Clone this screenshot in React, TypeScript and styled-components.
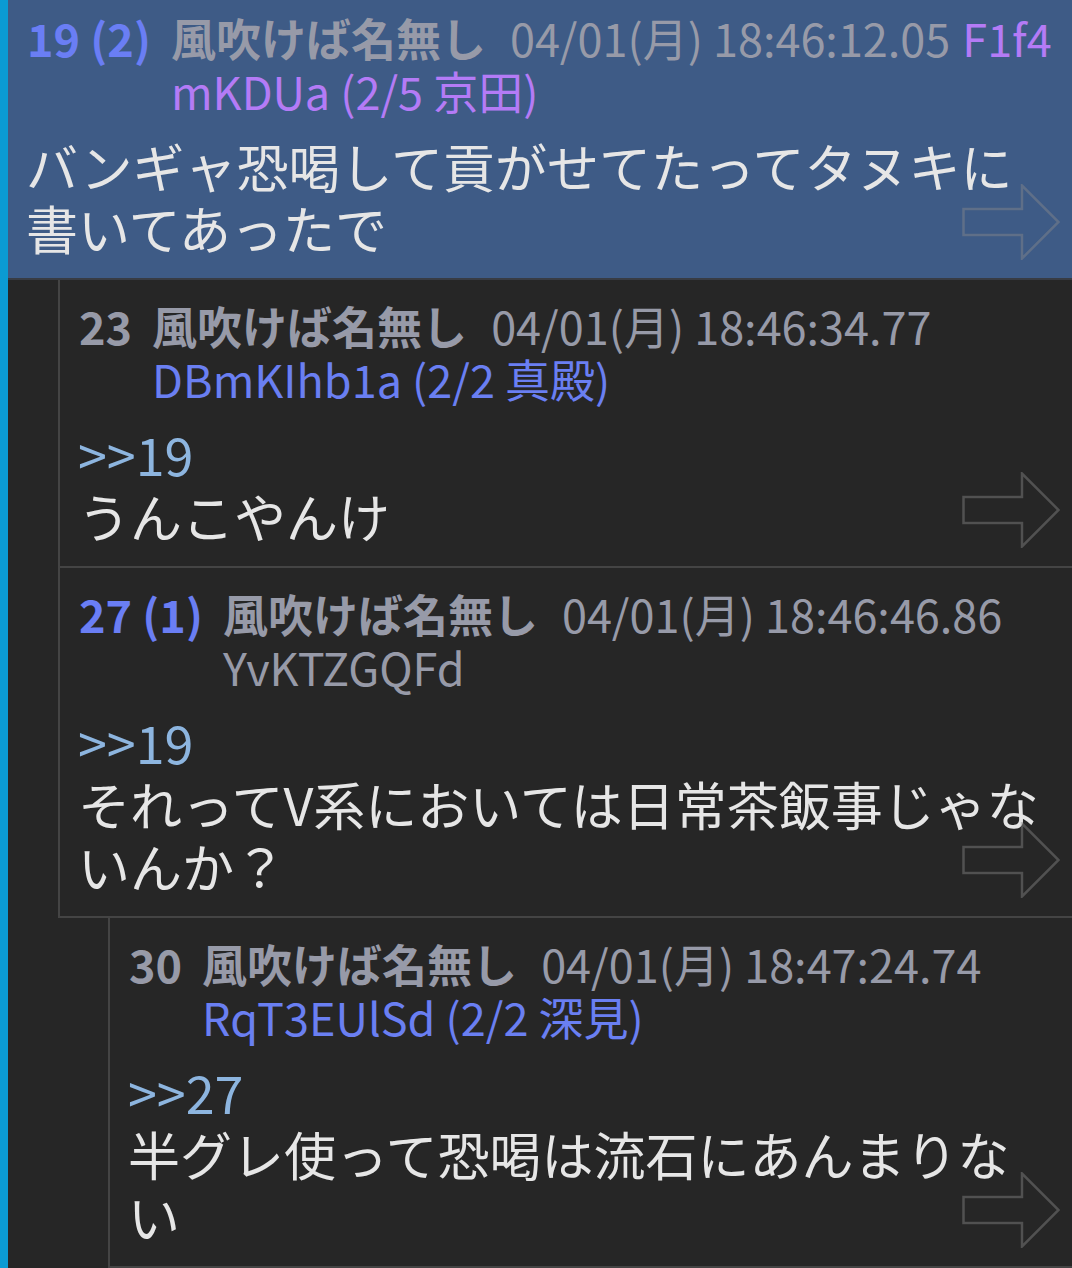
import React from "react";
import styled, { createGlobalStyle } from "styled-components";

const GlobalStyle = createGlobalStyle`
  html, body {
    margin: 0;
    padding: 0;
    background: #262626;
  }
  body {
    font-family: "Noto Sans CJK JP", "Noto Sans", sans-serif;
  }
`;

type Tone = "purple" | "blue" | "gray";

interface PostData {
  no: number;
  refs?: number;
  level: number;
  highlight?: boolean;
  date: string;
  idHead?: string;
  idTail: string;
  idTone: Tone;
  anchor?: string;
  lines: string[];
}

const posts: PostData[] = [
  {
    no: 19,
    refs: 2,
    level: 0,
    highlight: true,
    date: "04/01(月) 18:46:12.05",
    idHead: "F1f4",
    idTail: "mKDUa (2/5 京田)",
    idTone: "purple",
    lines: ["バンギャ恐喝して貢がせてたってタヌキに書いてあったで"],
  },
  {
    no: 23,
    level: 1,
    date: "04/01(月) 18:46:34.77",
    idTail: "DBmKIhb1a (2/2 真殿)",
    idTone: "blue",
    anchor: ">>19",
    lines: ["うんこやんけ"],
  },
  {
    no: 27,
    refs: 1,
    level: 1,
    date: "04/01(月) 18:46:46.86",
    idTail: "YvKTZGQFd",
    idTone: "gray",
    anchor: ">>19",
    lines: ["それってV系においては日常茶飯事じゃないんか？"],
  },
  {
    no: 30,
    level: 2,
    date: "04/01(月) 18:47:24.74",
    idTail: "RqT3EUlSd (2/2 深見)",
    idTone: "blue",
    anchor: ">>27",
    lines: ["半グレ使って恐喝は流石にあんまりない"],
  },
];

const toneColor: Record<Tone, string> = {
  purple: "#b47bf6",
  blue: "#6a7ff2",
  gray: "#979aa8",
};

const Screen = styled.div`
  display: flex;
  height: 1268px;
  overflow: hidden;
  background: #262626;
`;

const Rail = styled.div`
  flex: none;
  width: 8px;
  background: #0b9bd3;
`;

const Thread = styled.main`
  flex: 1;
  min-width: 0;
  display: flex;
  flex-direction: column;
  margin-top: -8px;
`;

const Post = styled.article<{ $level: number; $highlight?: boolean }>`
  position: relative;
  margin-left: ${(p) => p.$level * 50}px;
  padding: 19px 20px 19px 18px;
  background: ${(p) => (p.$highlight ? "#3e5b86" : "transparent")};
  border-bottom: 2px solid ${(p) => (p.$level === 0 ? "#383c44" : "#444444")};
  border-left: ${(p) => (p.$level > 0 ? "2px solid #444444" : "none")};
`;

const Head = styled.header`
  display: flex;
  align-items: flex-start;
  padding-left: 1px;
  font-size: 45px;
  line-height: 53px;
  color: #979aa8;
`;

const Num = styled.span<{ $hot: boolean }>`
  flex: none;
  white-space: nowrap;
  font-weight: 700;
  color: ${(p) => (p.$hot ? "#6a7ef4" : "#979aa8")};
  margin-right: 20px;
`;

const Meta = styled.div`
  display: flex;
  flex-direction: column;
  min-width: 0;
`;

const MetaLine = styled.div`
  white-space: nowrap;
`;

const Name = styled.span`
  font-weight: 700;
  margin-right: 24px;
`;

const Stamp = styled.span`
  font-weight: 400;
`;

const Id = styled.span<{ $tone: Tone; $inline?: boolean }>`
  color: ${(p) => toneColor[p.$tone]};
  margin-left: ${(p) => (p.$inline ? "12px" : "0")};
`;

const Body = styled.div`
  margin-top: 18px;
  font-size: 52px;
  line-height: 62px;
  color: #e6e6e6;
`;

const Anchor = styled.div`
  color: #8db5df;
`;

const Text = styled.div`
  word-break: break-all;
`;

const Forward = styled.svg`
  position: absolute;
  right: 12px;
  bottom: 18px;
  width: 98px;
  height: 76px;
`;

function Arrow() {
  return (
    <Forward viewBox="0 0 98 76" aria-hidden="true">
      <polygon
        points="1.5,25 60,25 60,1.5 96.5,38 60,74.5 60,51 1.5,51"
        fill="none"
        stroke="rgba(140,140,140,0.42)"
        strokeWidth="2.5"
        strokeLinejoin="miter"
      />
    </Forward>
  );
}

function PostView({ post }: { post: PostData }) {
  return (
    <Post $level={post.level} $highlight={post.highlight}>
      <Head>
        <Num $hot={post.refs !== undefined}>
          {post.no}
          {post.refs !== undefined ? ` (${post.refs})` : ""}
        </Num>
        <Meta>
          <MetaLine>
            <Name>風吹けば名無し</Name>
            <Stamp>{post.date}</Stamp>
            {post.idHead && (
              <Id $tone={post.idTone} $inline>
                {post.idHead}
              </Id>
            )}
          </MetaLine>
          <MetaLine>
            <Id $tone={post.idTone}>{post.idTail}</Id>
          </MetaLine>
        </Meta>
      </Head>
      <Body>
        {post.anchor && <Anchor>{post.anchor}</Anchor>}
        {post.lines.map((l, i) => (
          <Text key={i}>{l}</Text>
        ))}
      </Body>
      <Arrow />
    </Post>
  );
}

export default function App() {
  return (
    <>
      <GlobalStyle />
      <Screen>
        <Rail />
        <Thread>
          {posts.map((p) => (
            <PostView key={p.no} post={p} />
          ))}
        </Thread>
      </Screen>
    </>
  );
}
